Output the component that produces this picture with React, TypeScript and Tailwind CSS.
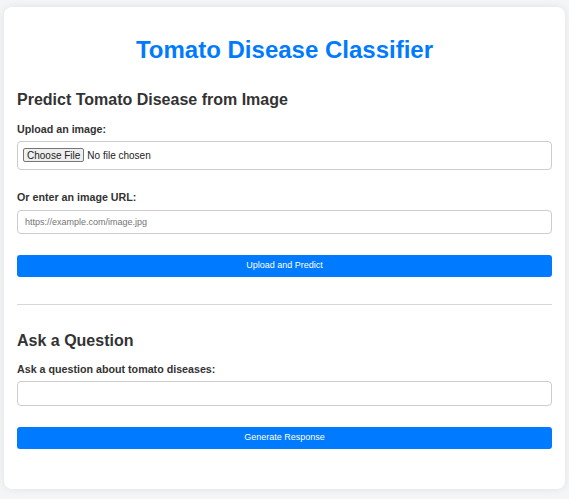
import { useState } from "react";

export default function App() {
  const [url, setUrl] = useState("");
  const [question, setQuestion] = useState("");

  return (
    <div className="min-h-screen bg-[#f4f5f7] px-[4px] pt-[7px] pb-[9px] font-['Liberation_Sans',Arial,sans-serif]">
      <div className="bg-white rounded-[8px] shadow-[0_0_8px_rgba(0,0,0,0.08)] px-[13px] pt-[28px] pb-[40px]">
        <h1 className="text-center text-[#007bff] font-bold text-[24px] leading-[30px]">
          Tomato Disease Classifier
        </h1>

        <h2 className="mt-[24px] text-[#333] font-bold text-[16px] leading-[22px]">
          Predict Tomato Disease from Image
        </h2>
        <label className="block mt-[11px] text-[#333] font-bold text-[10.7px] leading-[14px]">
          Upload an image:
        </label>
        <input
          type="file"
          className="block mt-[5px] w-full border border-[#ccc] rounded-[4px] px-[5px] py-[6px] leading-[14px] text-[10px] text-[#222] file:font-[inherit] file:mr-[3px] file:px-[3px] file:py-0 file:h-[14px] file:border file:border-[#767676] file:bg-[#efefef] file:rounded-[2px] file:text-[10px]"
        />

        <label className="block mt-[20px] text-[#333] font-bold text-[10.7px] leading-[14px]">
          Or enter an image URL:
        </label>
        <input
          type="text"
          value={url}
          onChange={(e) => setUrl(e.target.value)}
          placeholder="https://example.com/image.jpg"
          className="block mt-[6px] w-full h-[24px] border border-[#ccc] rounded-[4px] px-[7px] text-[9px] placeholder:text-[#757575] outline-none"
        />
        <button className="block mt-[21px] w-full h-[22px] bg-[#007bff] text-white text-[9px] rounded-[3px]">
          Upload and Predict
        </button>

        <hr className="mt-[27px] border-t border-[#d5d8dd]" />

        <h2 className="mt-[25px] text-[#333] font-bold text-[16px] leading-[22px]">
          Ask a Question
        </h2>
        <label className="block mt-[10px] text-[#333] font-bold text-[10.7px] leading-[14px]">
          Ask a question about tomato diseases:
        </label>
        <input
          type="text"
          value={question}
          onChange={(e) => setQuestion(e.target.value)}
          className="block mt-[5px] w-full h-[25px] border border-[#ccc] rounded-[4px] px-[7px] text-[11px] outline-none"
        />
        <button className="block mt-[21px] w-full h-[22px] bg-[#007bff] text-white text-[9px] rounded-[3px]">
          Generate Response
        </button>
      </div>
    </div>
  );
}
